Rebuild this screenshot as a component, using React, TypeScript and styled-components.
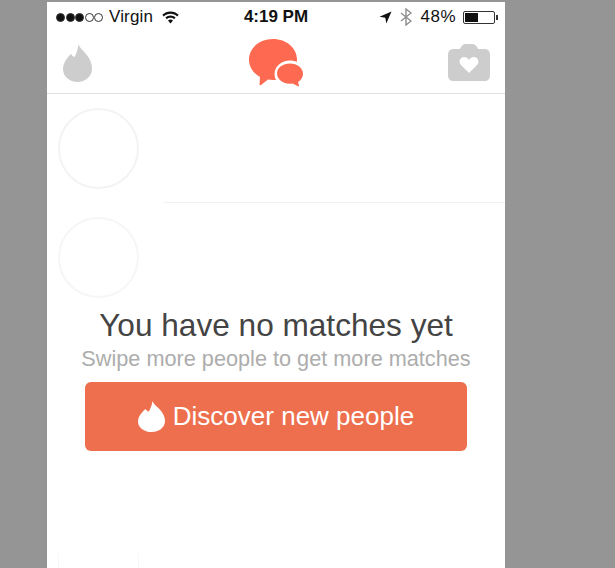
import React, { FC } from 'react'
import styled, { createGlobalStyle } from 'styled-components';

const GlobalStyle = createGlobalStyle`
    html, body {
        margin: 0;
        padding: 0;
        height: 568px;
        overflow: hidden;
        background: #959595;
        font-family: "Liberation Sans", Arial, sans-serif;
    }
`;

const Page = styled.div`
    width: 615px;
    height: 568px;
    overflow: hidden;
    padding: 2px 0 0 47px;
    box-sizing: border-box;
    background: #959595;
`;

const Phone = styled.div`
    width: 458px;
    height: 566px;
    background: #fff;
    overflow: hidden;
`;

const StatusBar = styled.div`
    display: grid;
    grid-template-columns: 1fr auto 1fr;
    align-items: center;
    height: 30px;
    padding: 0 7px 0 9px;
    font-size: 17px;
    color: #111;
`;

const StatusLeft = styled.div`
    display: flex;
    align-items: center;
    gap: 6px;
`;

const Dots = styled.div`
    display: flex;
    gap: 0.5px;
`;

const Dot = styled.span<{ $filled: boolean }>`
    width: 9px;
    height: 9px;
    box-sizing: border-box;
    border-radius: 50%;
    border: 1px solid #333;
    background: ${p => (p.$filled ? '#111' : 'transparent')};
`;

const Carrier = styled.span`
    margin-right: 3px;
    letter-spacing: 0.15px;
`;

const Time = styled.div`
    font-size: 17px;
    font-weight: 700;
    margin-left: -2px;
`;

const StatusRight = styled.div`
    display: flex;
    align-items: center;
    justify-content: flex-end;
    gap: 8px;
`;

const Percent = styled.span`
    letter-spacing: 0.5px;
    margin-right: -1px;
`;

const Battery = styled.div`
    display: flex;
    align-items: center;
`;

const BatteryBody = styled.div`
    width: 32px;
    height: 13px;
    box-sizing: border-box;
    border: 1px solid #333;
    border-radius: 2px;
    padding: 1px;
`;

const BatteryFill = styled.div`
    width: 48%;
    height: 100%;
    background: #111;
`;

const BatteryTip = styled.div`
    width: 2px;
    height: 5px;
    margin-left: 1px;
    background: #333;
`;

const NavBar = styled.div`
    display: grid;
    grid-template-columns: 1fr auto 1fr;
    align-items: center;
    height: 61px;
    padding: 0 15px 0 16px;
    border-bottom: 1px solid #e2e2e2;
`;

const NavCenter = styled.div`
    display: flex;
    margin: 1px 0 0 -1px;
`;

const NavRight = styled.div`
    display: flex;
    justify-content: flex-end;
`;

const List = styled.div`
    display: flex;
    flex-direction: column;
    padding-top: 14px;
`;

const Row = styled.div`
    display: flex;
    padding-left: 11px;
    height: 109px;
    box-sizing: border-box;
`;

const Avatar = styled.div<{ $shade: string }>`
    width: 81px;
    height: 81px;
    box-sizing: border-box;
    border-radius: 50%;
    border: 2px solid ${p => p.$shade};
`;

const RowDivider = styled.div`
    height: 1px;
    margin: -15px 0 14px 117px;
    background: #f0f0f0;
`;

const EmptyState = styled.div`
    display: flex;
    flex-direction: column;
    align-items: center;
    margin-top: -19px;
`;

const Title = styled.h1`
    margin: 0;
    font-size: 31.6px;
    line-height: 36px;
    font-weight: 400;
    color: #444;
`;

const Subtitle = styled.p`
    margin: 4px 0 0;
    font-size: 21.7px;
    line-height: 24px;
    color: #adadad;
`;

const DiscoverButton = styled.button`
    display: flex;
    align-items: center;
    justify-content: center;
    gap: 8px;
    width: 382px;
    height: 69px;
    margin-top: 11px;
    padding: 0;
    border: none;
    border-radius: 6px;
    background: #ee6f4d;
    color: #fff;
    font-family: inherit;
    font-size: 26px;
`;

const FadedRow = styled.div`
    padding: 102px 0 0 11px;
`;

const FadedAvatar = styled.div`
    width: 81px;
    height: 40px;
    box-sizing: border-box;
    border-left: 1px solid #f7f7f7;
    border-right: 1px solid #f7f7f7;
`;

const FLAME = 'M15.700 0C16.500 3.500 18.500 5 20.700 7.300 24.500 11.500 29 17 29 24.500 29 32.500 22.500 38 14.500 38 6.500 38 0 32.500 0 25 0 19 4 14 8 9.700 8.700 11 10 12.500 11.700 13 13.500 9 15 4.500 15.700 0z';

const Flame: FC<{ color: string; width: number; height: number }> = ({ color, width, height }) => (
    <svg width={width} height={height} viewBox='0 0 29 38' preserveAspectRatio='none'>
        <path d={FLAME} fill={color} />
    </svg>
);

const Wifi: FC = () => (
    <svg width={17} height={13} viewBox='0 0 17 13'>
        <path d='M8.500 0.500C5.300 0.500 2.500 1.700 0.300 3.800l1.500 1.600C3.600 3.700 5.900 2.700 8.500 2.700s4.900 1 6.700 2.700l1.500-1.600C14.500 1.700 11.700 0.500 8.500 0.500z' fill='#111' />
        <path d='M8.500 4.600c-2 0-3.800 0.800-5.100 2l1.500 1.600c1-0.900 2.200-1.400 3.600-1.400s2.600 0.500 3.600 1.400l1.500-1.600c-1.300-1.200-3.100-2-5.100-2z' fill='#111' />
        <path d='M8.500 8.600c-1 0-1.900 0.400-2.500 1l2.500 2.900 2.500-2.900c-0.600-0.600-1.500-1-2.500-1z' fill='#111' />
    </svg>
);

const LocationArrow: FC = () => (
    <svg width={13} height={13} viewBox='0 0 13 13'>
        <path d='M12.500 0.500L0.500 5.800l5.800 0.900 1 5.800z' fill='#111' />
    </svg>
);

const Bluetooth: FC = () => (
    <svg width={12} height={18} viewBox='0 0 12 18' fill='none' stroke='#8e8e8e' strokeWidth={1.4}>
        <path d='M1 5l10 8-5 4V1l5 4-10 8' />
    </svg>
);

const ChatBubbles: FC = () => (
    <svg width={55} height={48} viewBox='0 0 55 48'>
        <path d='M24 0c13.500 0 24 9 24 20.500S37.500 41 24 41c-1.700 0-3.400-0.100-5-0.400l-7 5.400c-0.800 0.600-1.500 0.300-1.500-0.700L11 38C4.500 34.500 0 28 0 20.500 0 9 10.500 0 24 0z' fill='#fe6a51' />
        <ellipse cx='41' cy='35' rx='15.500' ry='13.500' fill='#fff' />
        <path d='M41 24.500c7.200 0 13 4.500 13 10.300 0 3.700-2 6.500-5 8.200l1 3.500c0.200 0.700-0.300 1-0.900 0.700l-5.600-2.600c-0.800 0.100-1.600 0.200-2.500 0.200-7.200 0-13-4.600-13-10.300S33.800 24.500 41 24.500z' fill='#fe6a51' />
    </svg>
);

const CameraHeart: FC = () => (
    <svg width={42} height={37} viewBox='0 0 42 37'>
        <path d='M12 5c1-3 3-5 6-5h6c3 0 5 2 6 5h6c4 0 6 2 6 6v20c0 4-2 6-6 6H6c-4 0-6-2-6-6V11c0-4 2-6 6-6z' fill='#cdcdcd' />
        <path d='M21 29l-8-8c-3-3-1-8 3-8 2 0 4 1 5 3 1-2 3-3 5-3 4 0 6 5 3 8z' fill='#fff' />
    </svg>
);

export default function App() {
    return (
        <Page>
            <GlobalStyle />
            <Phone>
                <StatusBar>
                    <StatusLeft>
                        <Dots>
                            <Dot $filled={true} />
                            <Dot $filled={true} />
                            <Dot $filled={true} />
                            <Dot $filled={false} />
                            <Dot $filled={false} />
                        </Dots>
                        <Carrier>Virgin</Carrier>
                        <Wifi />
                    </StatusLeft>
                    <Time>4:19 PM</Time>
                    <StatusRight>
                        <LocationArrow />
                        <Bluetooth />
                        <Percent>48%</Percent>
                        <Battery>
                            <BatteryBody>
                                <BatteryFill />
                            </BatteryBody>
                            <BatteryTip />
                        </Battery>
                    </StatusRight>
                </StatusBar>

                <NavBar>
                    <Flame color='#cdcdcd' width={29} height={38} />
                    <NavCenter>
                        <ChatBubbles />
                    </NavCenter>
                    <NavRight>
                        <CameraHeart />
                    </NavRight>
                </NavBar>

                <List>
                    <Row>
                        <Avatar $shade='#f3f3f3' />
                    </Row>
                    <RowDivider />
                    <Row>
                        <Avatar $shade='#f6f6f6' />
                    </Row>
                </List>

                <EmptyState>
                    <Title>You have no matches yet</Title>
                    <Subtitle>Swipe more people to get more matches</Subtitle>
                    <DiscoverButton>
                        <Flame color='#fff' width={27} height={31} />
                        Discover new people
                    </DiscoverButton>
                </EmptyState>

                <FadedRow>
                    <FadedAvatar />
                </FadedRow>
            </Phone>
        </Page>
    )
}
